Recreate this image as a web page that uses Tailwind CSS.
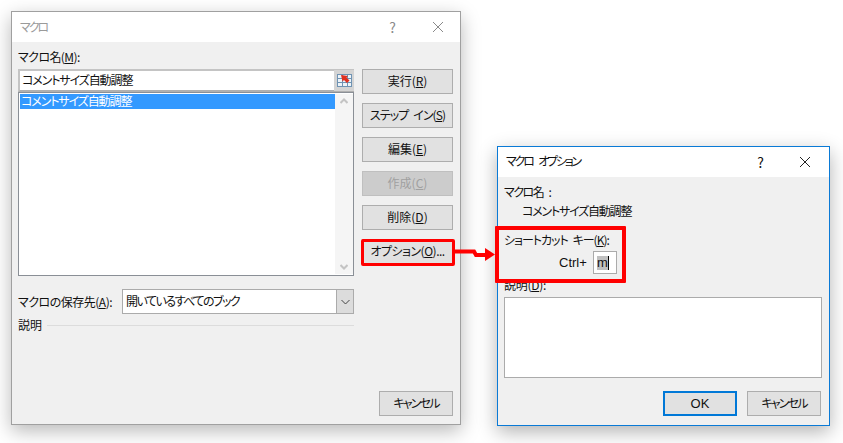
<!DOCTYPE html>
<html lang="ja">
<head>
  <meta charset="UTF-8">
  <title>マクロ</title>
  <script src="https://cdn.jsdelivr.net/npm/@tailwindcss/browser@4"></script>
</head>
<body class="relative w-[843px] h-[443px] overflow-hidden bg-white text-[12px] leading-[16px] text-[#111] font-['Noto_Sans_CJK_JP','Liberation_Sans',sans-serif] [font-feature-settings:'palt']">

  <!-- Macro window -->
  <div class="absolute left-[11px] top-[11px] w-[450px] h-[414px] bg-[#f0f0f0] border border-[#a0a0a0] shadow-[0_6px_18px_rgba(0,0,0,0.28)] flex flex-col">
    <div class="h-[30px] bg-white flex items-center pl-[8px] pr-[16px] shrink-0">
      <span class="flex-1 text-[#9a9a9a] tracking-[-2px]">マクロ</span>
      <span class="text-[#8a8a8a] text-[14px] mr-[36px]">?</span>
      <svg class="w-[12px] h-[12px]" viewBox="0 0 12 12" fill="none" stroke="#8a8a8a"><path d="M1 1l10 10M11 1L1 11"/></svg>
    </div>
    <div class="flex-1 flex pl-[6px] pr-[7px]">
      <!-- left column -->
      <div class="w-[336px] flex flex-col">
        <div class="h-[27px] pt-[7px] tracking-[-0.6px]">マクロ名(<u>M</u>):</div>
        <div class="h-[23px] bg-white border-2 border-[#b0b0b0] border-t-[#c4c4c4] border-l-[#c4c4c4] flex items-center justify-between pl-[2px] border-r-0">
          <span class="tracking-[-1.100px] pb-[2px]">コメントサイズ自動調整</span>
          <div class="w-[20px] h-[21px] bg-[#d4d4d4] flex items-center justify-center">
            <svg class="w-[15px] h-[13px]" viewBox="0 0 15 13">
              <rect width="15" height="13" fill="#edf3f8"/>
              <path d="M0 .5h15M0 4.500h15M0 8.500h15M0 12.500h15M.5 0v13M5.500 0v13M10.500 0v13M14.500 0v13" stroke="#6f93b3" stroke-width="1" fill="none"/>
              <path d="M4 1l7 1-1.500 1.500L12.500 6.500 10 9 7 6 5.500 7.500z" fill="#e03020"/>
            </svg>
          </div>
        </div>
        <div class="h-[184px] bg-white border border-[#8a8f96] flex p-[1px] pr-0">
          <div class="flex-1">
            <div class="h-[15px] leading-[13px] bg-[#3399ff] text-white pl-[1px] tracking-[-1.100px]">コメントサイズ自動調整</div>
          </div>
          <div class="w-[18px] flex flex-col items-center justify-between bg-[#f5f5f5] py-[4px]">
            <svg class="w-[8px] h-[6px]" viewBox="0 0 8 6" fill="none" stroke="#c4c4c4" stroke-width="2"><path d="M.5 5L4 1.500 7.500 5"/></svg>
            <svg class="w-[8px] h-[6px]" viewBox="0 0 8 6" fill="none" stroke="#c4c4c4" stroke-width="2"><path d="M.5 1L4 4.500 7.500 1"/></svg>
          </div>
        </div>
        <div class="mt-[13px] h-[25px] flex items-center">
          <span class="w-[104px] tracking-[-0.5px]">マクロの保存先(<u>A</u>):</span>
          <div class="flex-1 h-full bg-white border border-[#ababab] flex items-center justify-between pl-[3px]">
            <span class="tracking-[-1.500px] pb-[2px]">開いているすべてのブック</span>
            <div class="w-[17px] h-full bg-[#dcdcdc] border-l border-[#ababab] flex items-center justify-center">
              <svg class="w-[9px] h-[6px]" viewBox="0 0 9 6" fill="none" stroke="#444"><path d="M.5 1l4 4 4-4"/></svg>
            </div>
          </div>
        </div>
        <div class="mt-[3px] h-[16px] flex items-center gap-[5px]">
          <span>説明</span>
          <div class="flex-1 h-px bg-[#dcdcdc]"></div>
        </div>
      </div>
      <!-- buttons -->
      <div class="flex-1 flex flex-col items-end pt-[27px]">
        <div class="w-[91px] flex flex-col gap-[9px]">
          <button class="h-[25px] pb-[2px] bg-[#e1e1e1] border border-[#adadad]">実行(<u>R</u>)</button>
          <button class="h-[25px] pb-[2px] bg-[#e1e1e1] border border-[#adadad] tracking-[-0.9px] [word-spacing:3px]">ステップ イン(<u>S</u>)</button>
          <button class="h-[25px] pb-[2px] bg-[#e1e1e1] border border-[#adadad]">編集(<u>E</u>)</button>
          <button class="h-[25px] pb-[2px] bg-[#cccccc] border border-[#bfbfbf] text-[#a0a0a0]">作成(<u>C</u>)</button>
          <button class="h-[25px] pb-[2px] bg-[#e1e1e1] border border-[#adadad]">削除(<u>D</u>)</button>
          <button class="h-[25px] pb-[2px] bg-[#e1e1e1] border border-[#adadad] tracking-[-0.5px]">オプション(<u>O</u>)...</button>
        </div>
        <button class="mt-auto mb-[8px] w-[74px] h-[25px] pb-[2px] bg-[#e1e1e1] border border-[#adadad] tracking-[-1.800px]">キャンセル</button>
      </div>
    </div>
  </div>

  <!-- Options window -->
  <div class="absolute left-[497px] top-[146px] w-[333px] h-[280px] bg-[#f0f0f0] border border-[#0a7ad6] shadow-[0_6px_18px_rgba(0,0,0,0.3)] flex flex-col">
    <div class="h-[30px] bg-white flex items-center pl-[8px] pr-[18px] shrink-0">
      <span class="flex-1 tracking-[-2.200px] [word-spacing:5px] pb-[2px]">マクロ オプション</span>
      <span class="text-[14px] mr-[35px]">?</span>
      <svg class="w-[12px] h-[12px]" viewBox="0 0 12 12" fill="none" stroke="#222"><path d="M1 1l10 10M11 1L1 11"/></svg>
    </div>
    <div class="flex-1 flex flex-col pl-[6px] pr-[6px]">
      <div class="mt-[7px] h-[16px] tracking-[-1.500px] [word-spacing:4px]">マクロ名 :</div>
      <div class="mt-[3px] h-[16px] pl-[18px] tracking-[-1.200px]">コメントサイズ自動調整</div>
      <div class="mt-[13px] h-[16px] tracking-[-1px] [word-spacing:3px]">ショートカット キー(<u>K</u>):</div>
      <div class="mt-[3px] h-[23px] flex items-center pl-[55px]">
        <span class="w-[34px] font-['Liberation_Sans'] text-[13px]">Ctrl+</span>
        <div class="w-[24px] h-[23px] bg-white border border-[#ababab] flex items-center pl-[3px]">
          <span class="bg-[#c0c0c0] font-['Liberation_Sans'] text-[13px] leading-[14px] border-r border-black">m</span>
        </div>
      </div>
      <div class="mt-[3px] h-[16px] tracking-[-0.3px]">説明(<u>D</u>):</div>
      <div class="mt-[4px] w-[318px] h-[81px] bg-white border border-[#ababab]"></div>
      <div class="mt-[13px] flex justify-end gap-[10px] pr-[2px]">
        <button class="w-[74px] h-[25px] bg-[#e1e1e1] border-2 border-[#0078d7] font-['Liberation_Sans'] text-[13px]">OK</button>
        <button class="w-[74px] h-[25px] pb-[2px] bg-[#e1e1e1] border border-[#adadad] tracking-[-1.800px]">キャンセル</button>
      </div>
    </div>
  </div>

  <!-- Red annotations -->
  <div class="absolute left-[361px] top-[239px] w-[94px] h-[27px] border-[3px] border-[#ff0000] rounded-[2px]"></div>
  <div class="absolute left-[495px] top-[226px] w-[131px] h-[57px] border-[4px] border-[#ff0000] rounded-[1px]"></div>
  <svg class="absolute left-[454px] top-[245px]" width="42" height="16" viewBox="0 0 42 16">
    <path d="M0 6.500h20l2 3.500h10" stroke="#ff0000" stroke-width="4" fill="none"/>
    <path d="M31 3l10 6.500-10 6.500z" fill="#ff0000"/>
  </svg>
</body>
</html>
